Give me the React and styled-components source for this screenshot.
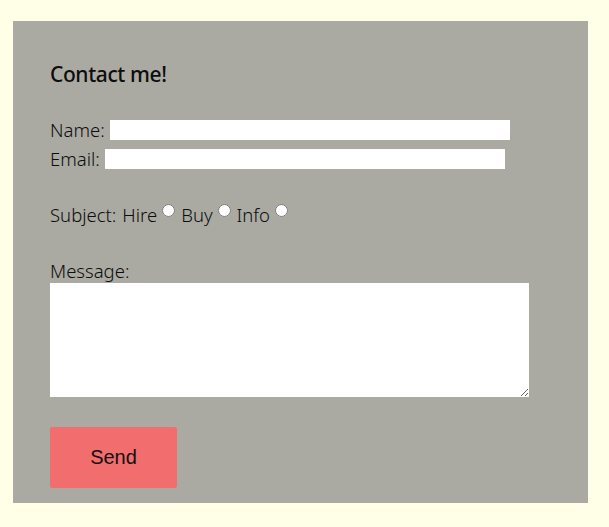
import React from 'react';
import styled, { createGlobalStyle } from 'styled-components';

const GlobalStyle = createGlobalStyle`
  body {
    margin: 0;
    background-color: #fffee6;
    font-family: "Noto Sans", "DejaVu Sans", sans-serif;
  }
`;

const Panel = styled.section`
  background-color: #aaaaa2;
  margin: 21px 21px 0 13px;
  height: 482px;
  box-sizing: border-box;
  padding: 42px 37px 0 37px;
  color: #0d0d0d;
`;

const Title = styled.h2`
  margin: 0 0 30px 0;
  font-size: 21px;
  line-height: 22px;
  font-weight: 500;
  letter-spacing: -0.4px;
`;

const Form = styled.form`
  display: flex;
  flex-direction: column;
  align-items: flex-start;
  font-size: 18.5px;
  font-weight: 300;
`;

const Row = styled.label`
  display: flex;
  align-items: center;
  height: 29px;
`;

const TextInput = styled.input`
  border: none;
  background: #fff;
  width: 400px;
  height: 20px;
  padding: 0;
  margin-left: 5px;
`;

const RadioGroup = styled.div`
  display: flex;
  align-items: center;
  height: 29px;
  margin-top: 27px;
  gap: 6px;
`;

const Choice = styled.label`
  display: flex;
  align-items: center;
`;

const Radio = styled.input`
  margin: 0 0 8px 5px;
  width: 13px;
  height: 13px;
`;

const MessageLabel = styled.label`
  margin-top: 30px;
  line-height: 24px;
`;

const Message = styled.textarea`
  border: none;
  width: 479px;
  height: 114px;
  padding: 0;
  margin: 0;
  display: block;
`;

const SendButton = styled.button`
  margin-top: 30px;
  width: 127px;
  height: 61px;
  border: none;
  border-radius: 2px;
  background-color: #f26d6d;
  color: #111;
  font-family: "Liberation Sans", Arial, sans-serif;
  font-size: 20px;
`;

export default function App() {
  return (
    <>
      <GlobalStyle />
      <Panel>
        <Title>Contact me!</Title>
        <Form onSubmit={(e) => e.preventDefault()}>
          <Row>
            Name:<TextInput type="text" />
          </Row>
          <Row>
            Email:<TextInput type="email" />
          </Row>
          <RadioGroup>
            <span>Subject:</span>
            <Choice>Hire<Radio type="radio" name="subject" /></Choice>
            <Choice>Buy<Radio type="radio" name="subject" /></Choice>
            <Choice>Info<Radio type="radio" name="subject" /></Choice>
          </RadioGroup>
          <MessageLabel>
            Message:
            <Message />
          </MessageLabel>
          <SendButton type="submit">Send</SendButton>
        </Form>
      </Panel>
    </>
  );
}
